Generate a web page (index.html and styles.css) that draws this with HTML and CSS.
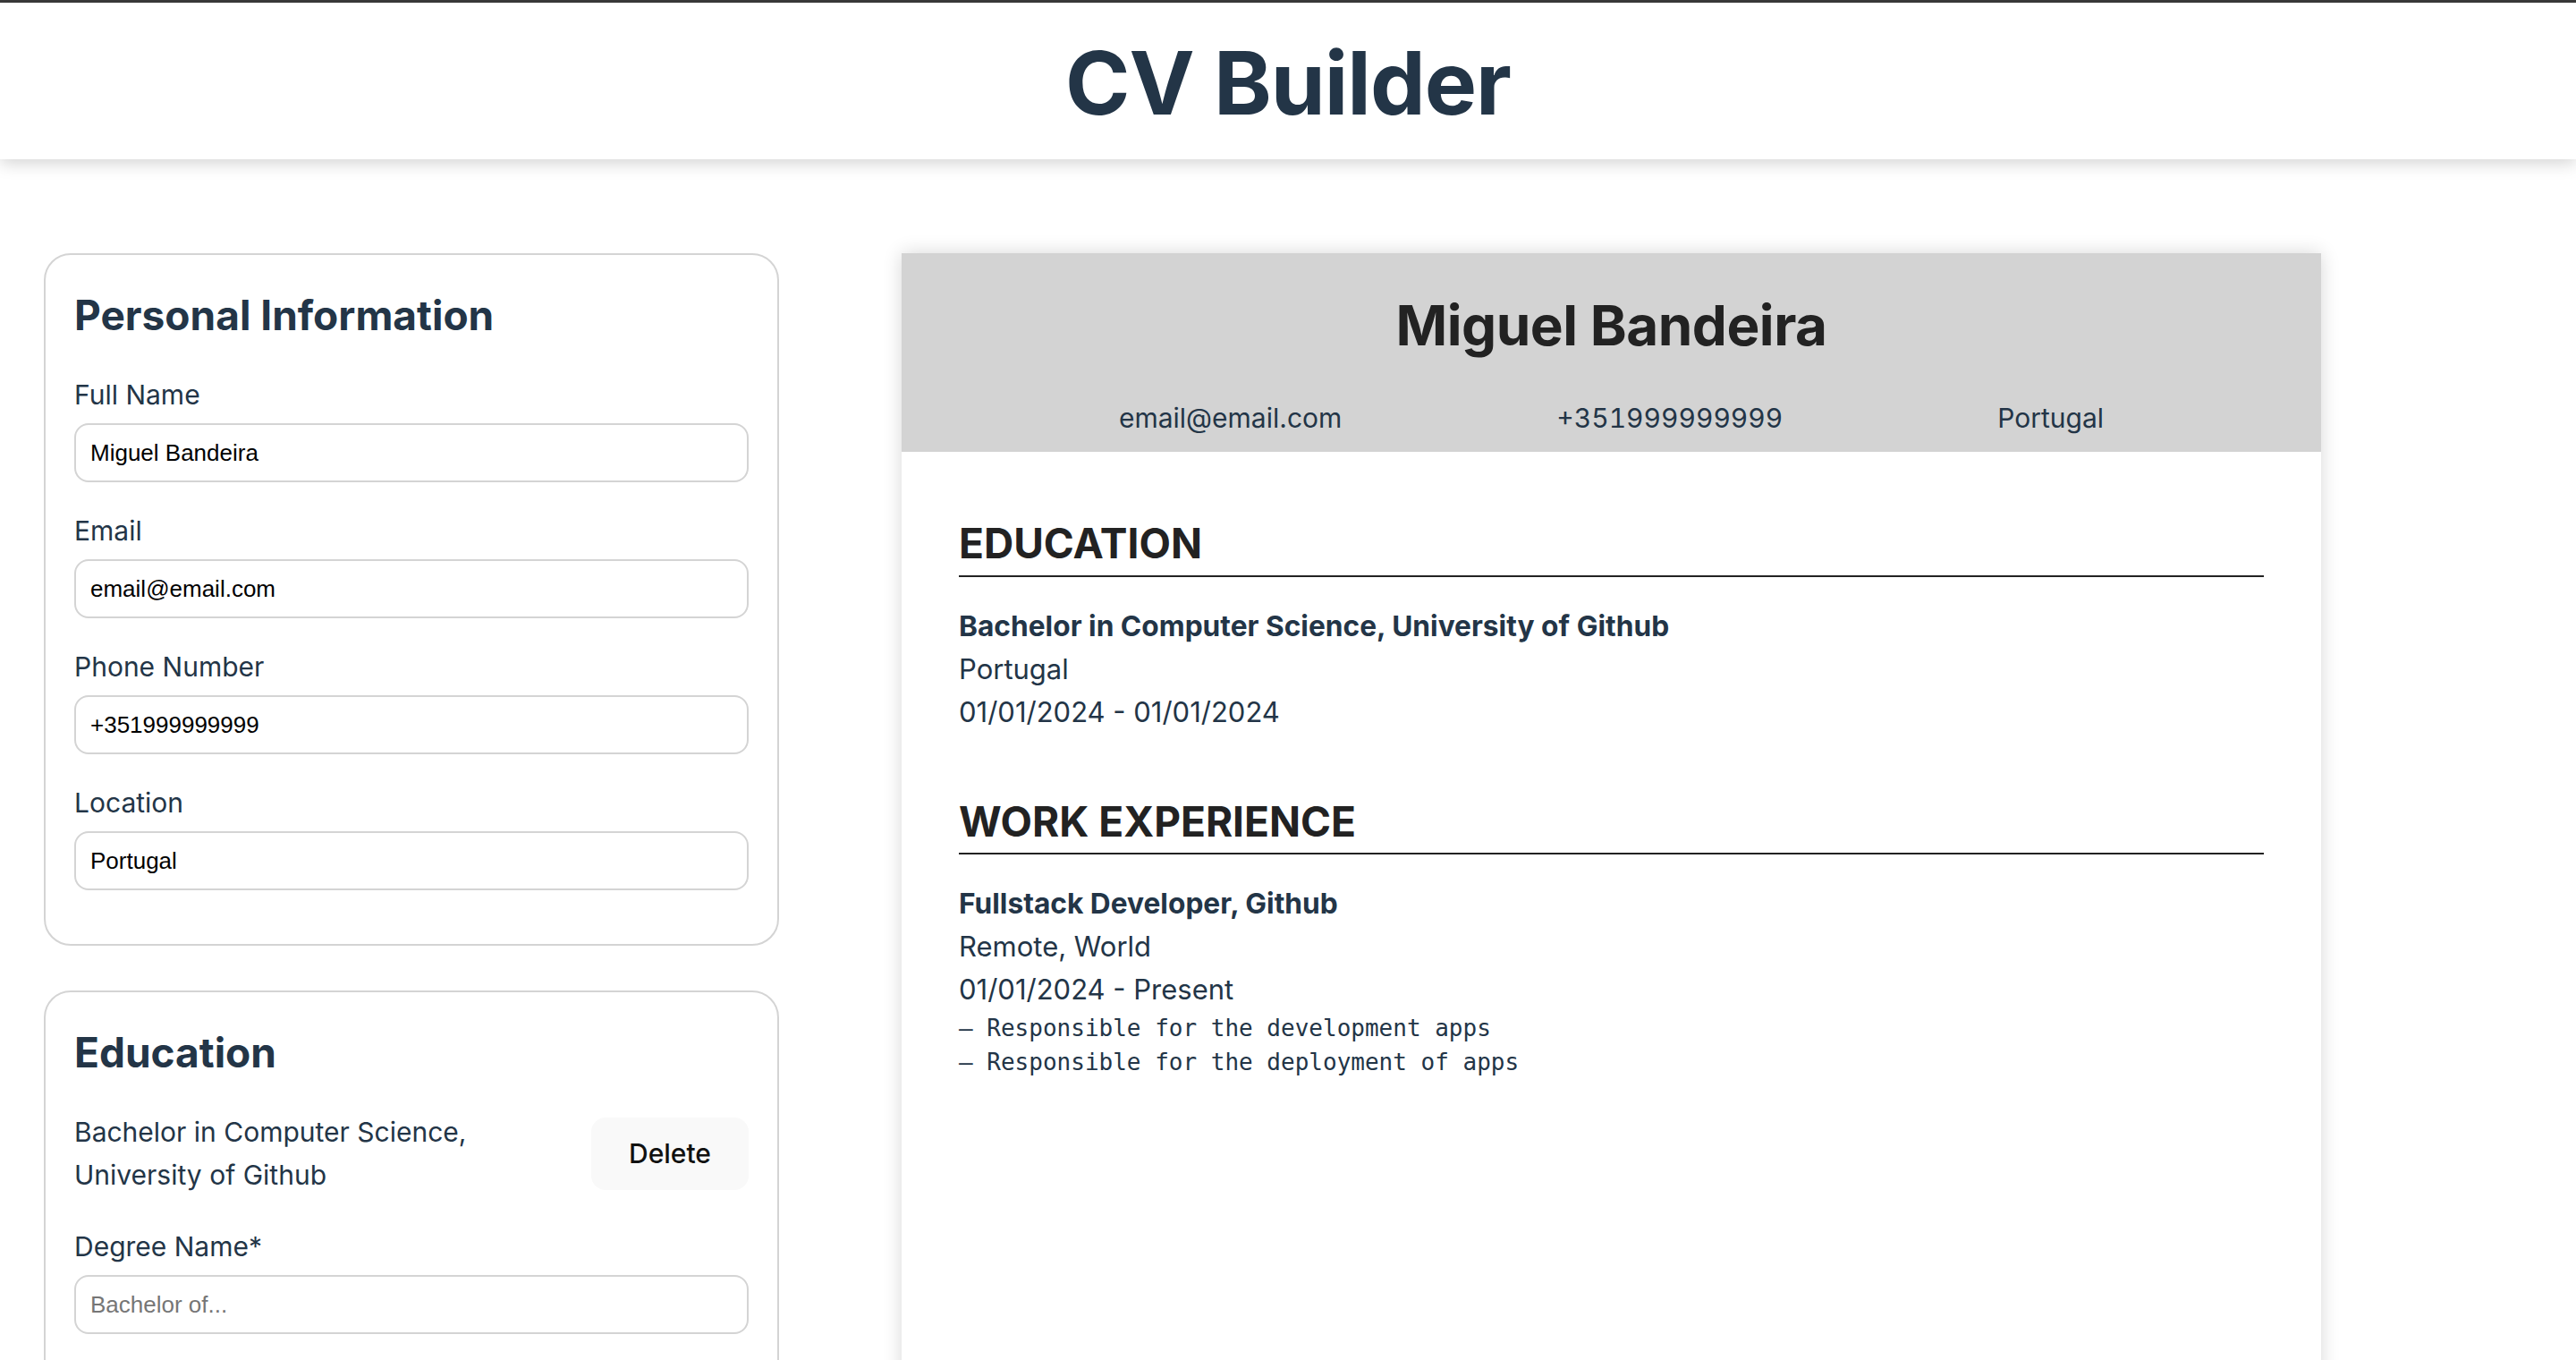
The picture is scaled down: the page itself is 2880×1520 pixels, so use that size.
FILE: index.html
```html
<!DOCTYPE html>
<html lang="en">
<head>
<meta charset="utf-8">
<title>CV Builder</title>
<link rel="stylesheet" href="styles.css">
</head>
<body>
<div class="topline"></div>
<header class="app-header">
  <h1 class="app-title">CV Builder</h1>
</header>
<main class="layout">
  <section class="editor">
    <div class="card">
      <h2 class="card-title">Personal Information</h2>
      <div class="form">
        <label class="field">
          <span class="field-label">Full Name</span>
          <input class="field-input" type="text" value="Miguel Bandeira">
        </label>
        <label class="field">
          <span class="field-label">Email</span>
          <input class="field-input" type="email" value="email@email.com">
        </label>
        <label class="field">
          <span class="field-label">Phone Number</span>
          <input class="field-input" type="tel" value="+351999999999">
        </label>
        <label class="field">
          <span class="field-label">Location</span>
          <input class="field-input" type="text" value="Portugal">
        </label>
      </div>
    </div>
    <div class="card">
      <h2 class="card-title">Education</h2>
      <div class="form">
        <div class="entry-row">
          <p class="entry-text">Bachelor in Computer Science, University of Github</p>
          <button class="btn-delete" type="button">Delete</button>
        </div>
        <label class="field">
          <span class="field-label">Degree Name*</span>
          <input class="field-input" type="text" placeholder="Bachelor of...">
        </label>
        <label class="field">
          <span class="field-label">School Name*</span>
          <input class="field-input" type="text" placeholder="University of...">
        </label>
        <label class="field">
          <span class="field-label">Location</span>
          <input class="field-input" type="text" placeholder="Portugal">
        </label>
      </div>
    </div>
  </section>

  <article class="cv">
    <div class="cv-head">
      <h2 class="cv-name">Miguel Bandeira</h2>
      <div class="cv-contacts">
        <span>email@email.com</span>
        <span class="cv-phone">+351999999999</span>
        <span>Portugal</span>
      </div>
    </div>
    <div class="cv-body">
      <section class="cv-section">
        <h3 class="cv-section-title">EDUCATION</h3>
        <div class="cv-item">
          <p class="cv-item-title">Bachelor in Computer Science, University of Github</p>
          <p class="cv-line">Portugal</p>
          <p class="cv-line">01/01/2024 - 01/01/2024</p>
        </div>
      </section>
      <section class="cv-section">
        <h3 class="cv-section-title">WORK EXPERIENCE</h3>
        <div class="cv-item">
          <p class="cv-item-title">Fullstack Developer, Github</p>
          <p class="cv-line">Remote, World</p>
          <p class="cv-line">01/01/2024 - Present</p>
          <p class="cv-desc">– Responsible for the development apps</p>
          <p class="cv-desc">– Responsible for the deployment of apps</p>
        </div>
      </section>
    </div>
  </article>
</main>
</body>
</html>
```

FILE: styles.css
```css
* {
  box-sizing: border-box;
}

html, body {
  margin: 0;
  padding: 0;
  background: #ffffff;
}

body {
  font-family: "Inter", "Noto Sans", sans-serif;
  color: #233547;
}

.topline {
  height: 3px;
  background: #3b3b3b;
}

.app-header {
  height: 175px;
  padding-top: 4px;
  background: #ffffff;
  box-shadow: 0 4px 18px rgba(0, 0, 0, 0.18);
  position: relative;
  z-index: 1;
}

.app-title {
  margin: 0;
  text-align: center;
  font-size: 98px;
  font-weight: 700;
  line-height: 172px;
  color: #233547;
  letter-spacing: -1px;
}

.layout {
  display: grid;
  grid-template-columns: 822px 1587px;
  column-gap: 137px;
  align-items: start;
  padding: 105px 49px 0;
}

.editor {
  display: flex;
  flex-direction: column;
  gap: 50px;
}

.card {
  border: 2px solid #d4d4d4;
  border-radius: 30px;
  padding: 40px 32px 60px;
}

.card-title {
  margin: 0 0 37px;
  font-size: 46px;
  font-weight: 700;
  line-height: 1.2;
  color: #233547;
}

.form {
  display: flex;
  flex-direction: column;
  gap: 30px;
}

.entry-row + .field {
  margin-top: 2px;
}

.field {
  display: flex;
  flex-direction: column;
  gap: 8px;
}

.field-label {
  font-size: 30px;
  line-height: 48px;
  color: #233547;
}

.field-input {
  height: 66px;
  width: 100%;
  border: 2px solid #d4d4d4;
  border-radius: 16px;
  padding: 0 16px;
  font-family: "Liberation Sans", Arial, sans-serif;
  font-size: 26px;
  color: #000000;
  background: #ffffff;
  outline: none;
}

.field-input::placeholder {
  color: #767676;
}

.entry-row {
  display: flex;
  align-items: center;
  justify-content: space-between;
  gap: 32px;
}

.entry-text {
  margin: 0;
  font-size: 30px;
  line-height: 48px;
  color: #233547;
}

.btn-delete {
  flex: none;
  border: none;
  border-radius: 16px;
  background: #f9f9f9;
  padding: 22px 42px;
  font-family: "Inter", sans-serif;
  font-size: 30px;
  font-weight: 500;
  line-height: 37px;
  color: #111111;
}

.cv {
  min-height: 2245px;
  background: #ffffff;
  box-shadow: 0 0 20px rgba(0, 0, 0, 0.16);
}

.cv-head {
  background: #d3d3d3;
  padding: 44px 0 14px;
  text-align: center;
}

.cv-name {
  margin: 0;
  font-size: 62px;
  font-weight: 700;
  line-height: 1.2;
  letter-spacing: -0.5px;
  color: #222222;
}

.cv-contacts {
  margin-top: 42px;
  display: flex;
  justify-content: center;
  gap: 240px;
  font-size: 30px;
  line-height: 48px;
  color: #233547;
}

.cv-phone {
  font-variant-numeric: tabular-nums;
}

.cv-body {
  padding: 75px 64px 64px;
}

.cv-section + .cv-section {
  margin-top: 71px;
}

.cv-section-title {
  margin: 0 0 31px;
  padding-bottom: 7px;
  border-bottom: 2px solid #222222;
  font-size: 46px;
  font-weight: 700;
  line-height: 1.2;
  color: #222222;
}

.cv-item p {
  margin: 0;
}

.cv-item-title {
  font-size: 31.7px;
  font-weight: 700;
  line-height: 48px;
  color: #233547;
}

.cv-line {
  font-size: 31px;
  line-height: 48px;
  color: #233547;
}

.cv-desc {
  font-family: "DejaVu Sans Mono", "Liberation Mono", monospace;
  font-size: 26px;
  line-height: 38px;
  color: #233547;
}
```
